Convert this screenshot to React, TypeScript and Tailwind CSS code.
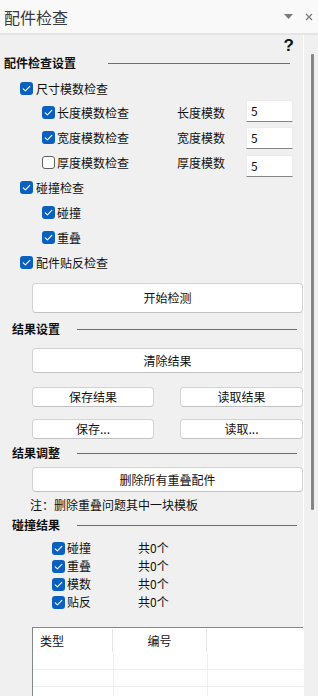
import React from "react";

const FONT = { fontFamily: '"Noto Sans CJK SC", "Noto Sans", sans-serif' };

function Check({ checked = true }: { checked?: boolean }) {
  if (!checked) {
    return <div className="w-[13px] h-[13px] shrink-0 rounded-[3px] border border-[#5f5f5f] bg-white" />;
  }
  return (
    <div className="w-[13px] h-[13px] shrink-0 rounded-[3px] bg-[#0a60be] flex items-center justify-center">
      <svg width="13" height="13" viewBox="0 0 13 13">
        <path d="M3.2 6.8 L5.4 8.8 L9.8 4.4" fill="none" stroke="#ffffff" strokeWidth="1.1" strokeLinecap="round" strokeLinejoin="round" />
      </svg>
    </div>
  );
}

function Header({ text, first = false }: { text: string; first?: boolean }) {
  return (
    <div className={`h-[16px] flex items-center ${first ? "pl-[4px]" : "pl-[12px]"}`}>
      <span className={`text-[12px] font-bold text-[#111] leading-none ${first ? "w-[104px]" : "w-[65px]"}`}>{text}</span>
      <div className={`h-px bg-[#6e6e6e] ${first ? "w-[182px]" : "w-[220px]"}`} />
    </div>
  );
}

function Btn({ text, w, h }: { text: string; w: string; h: string }) {
  return (
    <div className={`${w} ${h} bg-white border border-[#d3d3d3] border-b-[#c2c2c2] rounded-[4px] flex items-center justify-center text-[12px] text-[#111]`}>
      {text}
    </div>
  );
}

function InputBox({ v, cls }: { v: string; cls: string }) {
  return (
    <div className={`w-[47px] h-[22px] bg-white border border-[#ececec] border-b-[#868686] flex items-center pl-[4px] text-[12px] text-[#111] ${cls}`}>
      {v}
    </div>
  );
}

function ModRow({ label, right, checked, cls }: { label: string; right: string; checked: boolean; cls: string }) {
  return (
    <div className="h-[25px] flex items-center">
      <div className="w-[177px] flex items-center pl-[42px] gap-[2px]">
        <Check checked={checked} />
        <span className="text-[12px] text-[#111]">{label}</span>
      </div>
      <span className="w-[69px] text-[12px] text-[#111]">{right}</span>
      <InputBox v="5" cls={cls} />
    </div>
  );
}

function CbRow({ label, indent }: { label: string; indent: boolean }) {
  return (
    <div className={`h-[25px] flex items-center ${indent ? "pl-[42px] gap-[2px]" : "pl-[20px] gap-[3px]"}`}>
      <Check />
      <span className="text-[12px] text-[#111]">{label}</span>
    </div>
  );
}

function ResRow({ label }: { label: string }) {
  return (
    <div className="h-[18px] flex items-center pl-[52px]">
      <Check />
      <span className="w-[73px] pl-[2px] text-[12px] text-[#111]">{label}</span>
      <span className="text-[12px] text-[#111]">共0个</span>
    </div>
  );
}

export default function App() {
  return (
    <div className="w-[318px] h-[696px] bg-[#f0f0f0] overflow-hidden flex flex-col" style={FONT}>
      {/* title bar */}
      <div className="h-[35px] shrink-0 bg-[#f9f9f9] border-b-[2px] border-[#e4e4e4] flex items-center pl-[4px] pr-[5px]">
        <span className="text-[16px] text-[#3a3a3a] leading-none">配件检查</span>
        <div className="flex-1" />
        <svg width="9" height="6" viewBox="0 0 9 6" className="mr-[12px]">
          <path d="M0 0 L9 0 L4.5 5 Z" fill="#7a7a7a" />
        </svg>
        <svg width="8" height="8" viewBox="0 0 8 8">
          <path d="M1 1 L7 7 M7 1 L1 7" stroke="#7a7a7a" strokeWidth="1.2" />
        </svg>
      </div>

      <div className="flex-1 flex min-h-0">
        {/* content */}
        <div className="w-[303px] flex flex-col overflow-hidden [&>*]:shrink-0">
          <div className="h-[20px] flex items-center justify-end pr-[9px]">
            <span className="text-[17px] font-bold text-[#111] leading-none" style={{ fontFamily: '"Liberation Sans", sans-serif' }}>?</span>
          </div>
          <Header text="配件检查设置" first />
          <div className="h-[6px]" />
          <div className="h-[23px] flex items-center pl-[20px] gap-[3px]">
            <Check />
            <span className="text-[12px] text-[#111]">尺寸模数检查</span>
          </div>
          <ModRow label="长度模数检查" right="长度模数" checked cls="-mt-[4px]" />
          <ModRow label="宽度模数检查" right="宽度模数" checked cls="" />
          <ModRow label="厚度模数检查" right="厚度模数" checked={false} cls="mt-[6px]" />
          <CbRow label="碰撞检查" indent={false} />
          <CbRow label="碰撞" indent />
          <CbRow label="重叠" indent />
          <CbRow label="配件贴反检查" indent={false} />

          <div className="mt-[8px] pl-[32px]">
            <Btn text="开始检测" w="w-[271px]" h="h-[30px]" />
          </div>

          <div className="mt-[8px]">
            <Header text="结果设置" />
          </div>
          <div className="mt-[11px] pl-[32px]">
            <Btn text="清除结果" w="w-[271px]" h="h-[25px]" />
          </div>
          <div className="mt-[14px] pl-[32px] flex gap-[26px]">
            <Btn text="保存结果" w="w-[122px]" h="h-[20px]" />
            <Btn text="读取结果" w="w-[123px]" h="h-[20px]" />
          </div>
          <div className="mt-[12px] pl-[32px] flex gap-[26px]">
            <Btn text="保存..." w="w-[122px]" h="h-[20px]" />
            <Btn text="读取..." w="w-[123px]" h="h-[20px]" />
          </div>

          <div className="mt-[6px]">
            <Header text="结果调整" />
          </div>
          <div className="mt-[6px] pl-[32px]">
            <Btn text="删除所有重叠配件" w="w-[271px]" h="h-[25px]" />
          </div>
          <div className="mt-[5px] h-[16px] flex items-center pl-[30px] text-[12px] text-[#111]">
            注：删除重叠问题其中一块模板
          </div>
          <div className="mt-[4px]">
            <Header text="碰撞结果" />
          </div>
          <div className="mt-[6px] flex flex-col">
            <ResRow label="碰撞" />
            <ResRow label="重叠" />
            <ResRow label="模数" />
            <ResRow label="贴反" />
          </div>

          {/* table */}
          <div className="mt-[16px] ml-[32px] w-[271px] h-[100px] bg-white border-l border-t border-[#828790] flex flex-col">
            <div className="h-[25px] flex text-[12px] text-[#111]">
              <div className="w-[80px] flex items-center pl-[7px] border-r border-[#e5e5e5] my-px">类型</div>
              <div className="w-[94px] flex items-center justify-center border-r border-[#e5e5e5] my-px">编号</div>
              <div className="flex-1" />
            </div>
            {[0, 1, 2, 3].map((i) => (
              <div key={i} className="h-[17px] flex border-b border-[#efefef]">
                <div className="w-[81px] border-r border-[#efefef]" />
                <div className="w-[94px] border-r border-[#efefef]" />
                <div className="flex-1" />
              </div>
            ))}
          </div>
        </div>

        {/* scrollbar */}
        <div className="w-px bg-white" />
        <div className="w-[14px] pl-[7px] pt-[19px]">
          <div className="w-[3px] h-[456px] bg-[#868686] rounded-[1px]" />
        </div>
      </div>
    </div>
  );
}
